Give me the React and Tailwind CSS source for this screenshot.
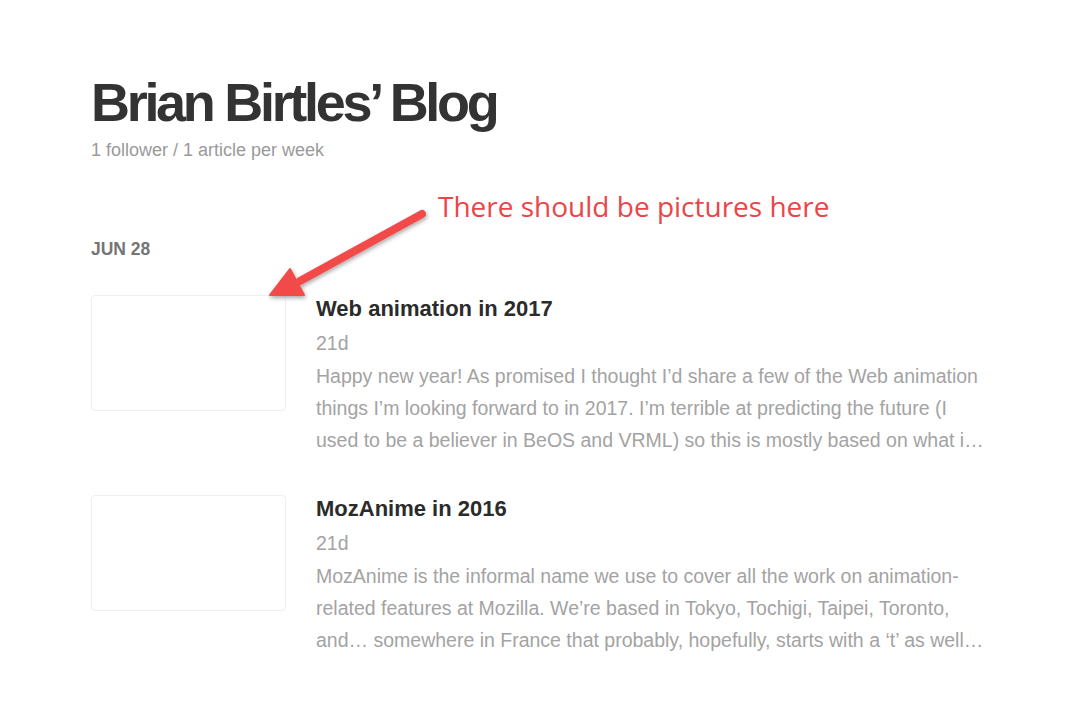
import React from "react";

const posts = [
  {
    title: "Web animation in 2017",
    age: "21d",
    excerpt:
      "Happy new year! As promised I thought I’d share a few of the Web animation things I’m looking forward to in 2017. I’m terrible at predicting the future (I used to be a believer in BeOS and VRML) so this is mostly based on what i…",
  },
  {
    title: "MozAnime in 2016",
    age: "21d",
    excerpt:
      "MozAnime is the informal name we use to cover all the work on animation-related features at Mozilla. We’re based in Tokyo, Tochigi, Taipei, Toronto, and… somewhere in France that probably, hopefully, starts with a ‘t’ as well…",
  },
];

function Arrow() {
  return (
    <svg
      className="absolute left-[262px] top-[201px]"
      width="180"
      height="110"
      viewBox="0 0 180 110"
    >
      <defs>
        <filter id="shadow" x="-20%" y="-20%" width="140%" height="140%">
          <feDropShadow dx="1" dy="2" stdDeviation="2" floodColor="#000" floodOpacity="0.35" />
        </filter>
      </defs>
      <g filter="url(#shadow)" fill="#f24a4a" stroke="#f24a4a">
        <line x1="160" y1="13" x2="38" y2="80" strokeWidth="8" strokeLinecap="round" />
        <polygon points="8,94 28,68 42,94" strokeWidth="2" strokeLinejoin="round" />
      </g>
    </svg>
  );
}

function PostRow({ post }) {
  return (
    <div className="flex gap-[30px]">
      <div className="w-[195px] h-[116px] shrink-0 rounded-[4px] border border-[#efefef] bg-white" />
      <div className="w-[672px]">
        <h2 className="text-[22px] leading-[28px] font-bold text-[#2b2b2b]">{post.title}</h2>
        <div className="mt-[6px] text-[19.5px] leading-[28px] text-[#a3a3a3]">{post.age}</div>
        <p className="mt-[3px] text-[19.5px] leading-[32px] text-[#a3a3a3] line-clamp-3">{post.excerpt}</p>
      </div>
    </div>
  );
}

export default function App() {
  return (
    <div
      className="relative min-h-[702px] bg-white pl-[91px] pt-[75px]"
      style={{ fontFamily: '"Liberation Sans", Arial, sans-serif' }}
    >
      <h1 className="text-[54px] leading-[54px] font-bold tracking-[-3.3px] text-[#333]">
        Brian Birtles’ Blog
      </h1>
      <div className="mt-[9px] text-[18px] leading-[24px] text-[#9a9a9a]">
        1 follower / 1 article per week
      </div>

      <div className="mt-[76px] text-[17.5px] leading-[22px] font-bold text-[#757575]">JUN 28</div>

      <div className="mt-[35px] flex flex-col gap-[39px]">
        {posts.map((p) => (
          <PostRow key={p.title} post={p} />
        ))}
      </div>

      <div
        className="absolute left-[438px] top-[186px] text-[28px] leading-[40px] text-[#ea4649]"
        style={{ fontFamily: '"Open Sans", sans-serif' }}
      >
        There should be pictures here
      </div>
      <Arrow />
    </div>
  );
}
